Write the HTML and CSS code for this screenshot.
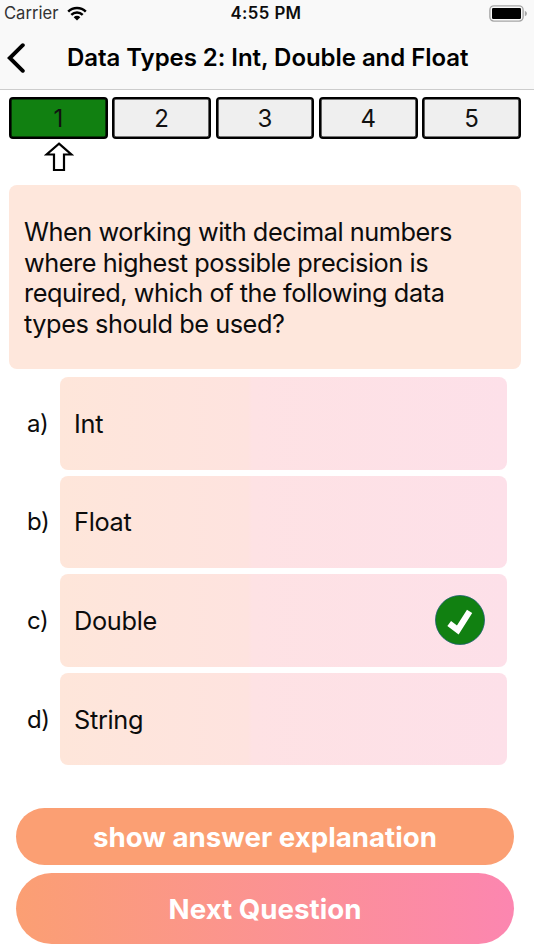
FILE: index.html
```
<!DOCTYPE html>
<html lang="en">
<head>
    <meta charset="UTF-8">
    <meta name="viewport" content="width=device-width, initial-scale=1.0">
    <title>Data Types 2: Int, Double and Float</title>
    <link rel="stylesheet" href="styles.css">
</head>
<body>
    <header class="header">
        <div class="status-bar">
            <div class="carrier">
                <span>Carrier</span>
                <svg class="wifi" viewBox="0 0 20 15">
                    <path d="M1.2 5.6 A12.4 12.4 0 0 1 18.8 5.6" fill="none" stroke="#000" stroke-width="2.5"/>
                    <path d="M4.3 8.9 A8 8 0 0 1 15.7 8.9" fill="none" stroke="#000" stroke-width="2.4"/>
                    <path d="M6.7 11.2 A4.7 4.7 0 0 1 13.3 11.2 L10 14.5 Z"/>
                </svg>
            </div>
            <span class="time">4:55 PM</span>
            <svg class="battery" viewBox="0 0 39 17">
                <rect x="0.9" y="0.9" width="33.2" height="15.2" rx="4" fill="none" stroke="#a6a6a6" stroke-width="1.4"/>
                <rect x="3" y="3" width="29" height="11" rx="1.2"/>
                <path d="M35.8 5.7 Q38 6.6 38 8.5 Q38 10.4 35.8 11.3 Z" fill="#a6a6a6"/>
            </svg>
        </div>
        <div class="nav-bar">
            <svg class="back" viewBox="0 0 18 30">
                <path d="M15.8 2.2 L2.8 15 L15.8 27.8" fill="none" stroke="#000" stroke-width="3.9" stroke-linecap="round" stroke-linejoin="miter"/>
            </svg>
            <h1 class="title">Data Types 2: Int, Double and Float</h1>
        </div>
    </header>

    <main class="quiz">
        <div class="steps">
            <button class="step active">1</button>
            <button class="step">2</button>
            <button class="step">3</button>
            <button class="step">4</button>
            <button class="step">5</button>
        </div>
        <div class="pointer">
            <svg class="arrow" viewBox="0 0 30 30">
                <path d="M15 1.6 L27.4 12.5 L20 12.5 L20 28 L10 28 L10 12.5 L2.6 12.5 Z" fill="#fff" stroke="#000" stroke-width="2.2"/>
            </svg>
        </div>

        <p class="question">
            When working with decimal numbers<br>
            where highest possible precision is<br>
            required, which of the following data<br>
            types should be used?
        </p>

        <div class="answers">
            <div class="row">
                <span class="letter">a)</span>
                <div class="answer"><span>Int</span></div>
            </div>
            <div class="row">
                <span class="letter">b)</span>
                <div class="answer"><span>Float</span></div>
            </div>
            <div class="row">
                <span class="letter">c)</span>
                <div class="answer">
                    <span>Double</span>
                    <svg class="check" viewBox="0 0 50 50">
                        <circle cx="25" cy="25" r="24.5" fill="#118011" stroke="#1c6070" stroke-width="0.8"/>
                        <path d="M14.2 28.6 L22.8 35 L34.6 16.4" fill="none" stroke="#fff" stroke-width="6.2"/>
                    </svg>
                </div>
            </div>
            <div class="row">
                <span class="letter">d)</span>
                <div class="answer"><span>String</span></div>
            </div>
        </div>

        <div class="buttons">
            <button class="btn explain">show answer explanation</button>
            <button class="btn next">Next Question</button>
        </div>
    </main>
</body>
</html>
```

FILE: styles.css
```
* {
    box-sizing: border-box;
}

body {
    margin: 0;
    background-color: #fff;
    color: #0c0c0c;
    font-family: Inter, "Liberation Sans", sans-serif;
}

button {
    font-family: inherit;
    margin: 0;
    padding: 0;
}

.header {
    height: 90px;
    background-color: #f9f9f9;
    border-bottom: 1px solid #cdcdcd;
}

/* Status bar */
.status-bar {
    display: grid;
    grid-template-columns: 1fr auto 1fr;
    align-items: center;
    height: 26px;
    padding: 0 6px 0 4px;
}

.carrier {
    display: flex;
    align-items: center;
    gap: 9px;
    font-size: 16.6px;
    color: #333;
}

.wifi {
    width: 20px;
    height: 15px;
}

.time {
    font-size: 16.8px;
    font-weight: 600;
    letter-spacing: 0.4px;
}

.battery {
    width: 39px;
    height: 17px;
    justify-self: end;
}

.nav-bar {
    display: flex;
    align-items: center;
    height: 63px;
    padding-left: 7px;
}

.back {
    width: 18px;
    height: 30px;
}

.title {
    margin: 0 0 0 42px;
    font-size: 24px;
    font-weight: 600;
    letter-spacing: -0.05px;
    white-space: nowrap;
    color: #000;
}

.quiz {
    padding: 7px 13px 0 9px;
}

/* Question numbers */
.steps {
    display: grid;
    grid-template-columns: repeat(5, 1fr);
    gap: 4.6px;
}

.step {
    height: 42px;
    border: 2px solid #000;
    border-radius: 4px;
    box-shadow: inset 0 0 0 0.6px #000;
    background-color: #efefef;
    font-size: 24px;
    color: #111;
}

.step.active {
    background-color: #118011;
}

.pointer {
    display: flex;
    justify-content: center;
    width: 99px;
    height: 46px;
    padding-top: 3px;
}

.arrow {
    width: 30px;
    height: 30px;
}

.question {
    display: flow-root;
    height: 184px;
    margin: 0;
    padding: 32px 0 0 15px;
    border-radius: 8px;
    background-color: #fee7dc;
    font-size: 25.3px;
    line-height: 30.5px;
    letter-spacing: -0.44px;
    white-space: nowrap;
}

.answers {
    display: flex;
    flex-direction: column;
    gap: 6.1px;
    padding: 8px 14px 0 0;
}

.row {
    display: flex;
    align-items: center;
    height: 92.5px;
}

.letter {
    width: 51px;
    padding-left: 18px;
    font-size: 24px;
    letter-spacing: -0.5px;
}

.answer {
    display: flex;
    flex: 1;
    align-items: center;
    justify-content: space-between;
    height: 100%;
    padding: 0 22.5px 0 14px;
    border-radius: 8px;
    background: linear-gradient(to right, #fee6da, #fee3df 42%, #fee2e4 43%, #fde0e9);
    font-size: 25.3px;
    letter-spacing: -0.3px;
}

.check {
    width: 50px;
    height: 50px;
}

/* Bottom buttons */
.buttons {
    display: flex;
    flex-direction: column;
    gap: 7.5px;
    padding: 43px 7px 0;
}

.btn {
    border: none;
    border-radius: 36px;
    color: #fff;
    font-size: 27.7px;
    font-weight: 700;
}

.explain {
    height: 57px;
    background-color: #fb9f73;
}

.next {
    height: 71.5px;
    background: linear-gradient(to right, #fb9f73, #fc86b0);
}
```
